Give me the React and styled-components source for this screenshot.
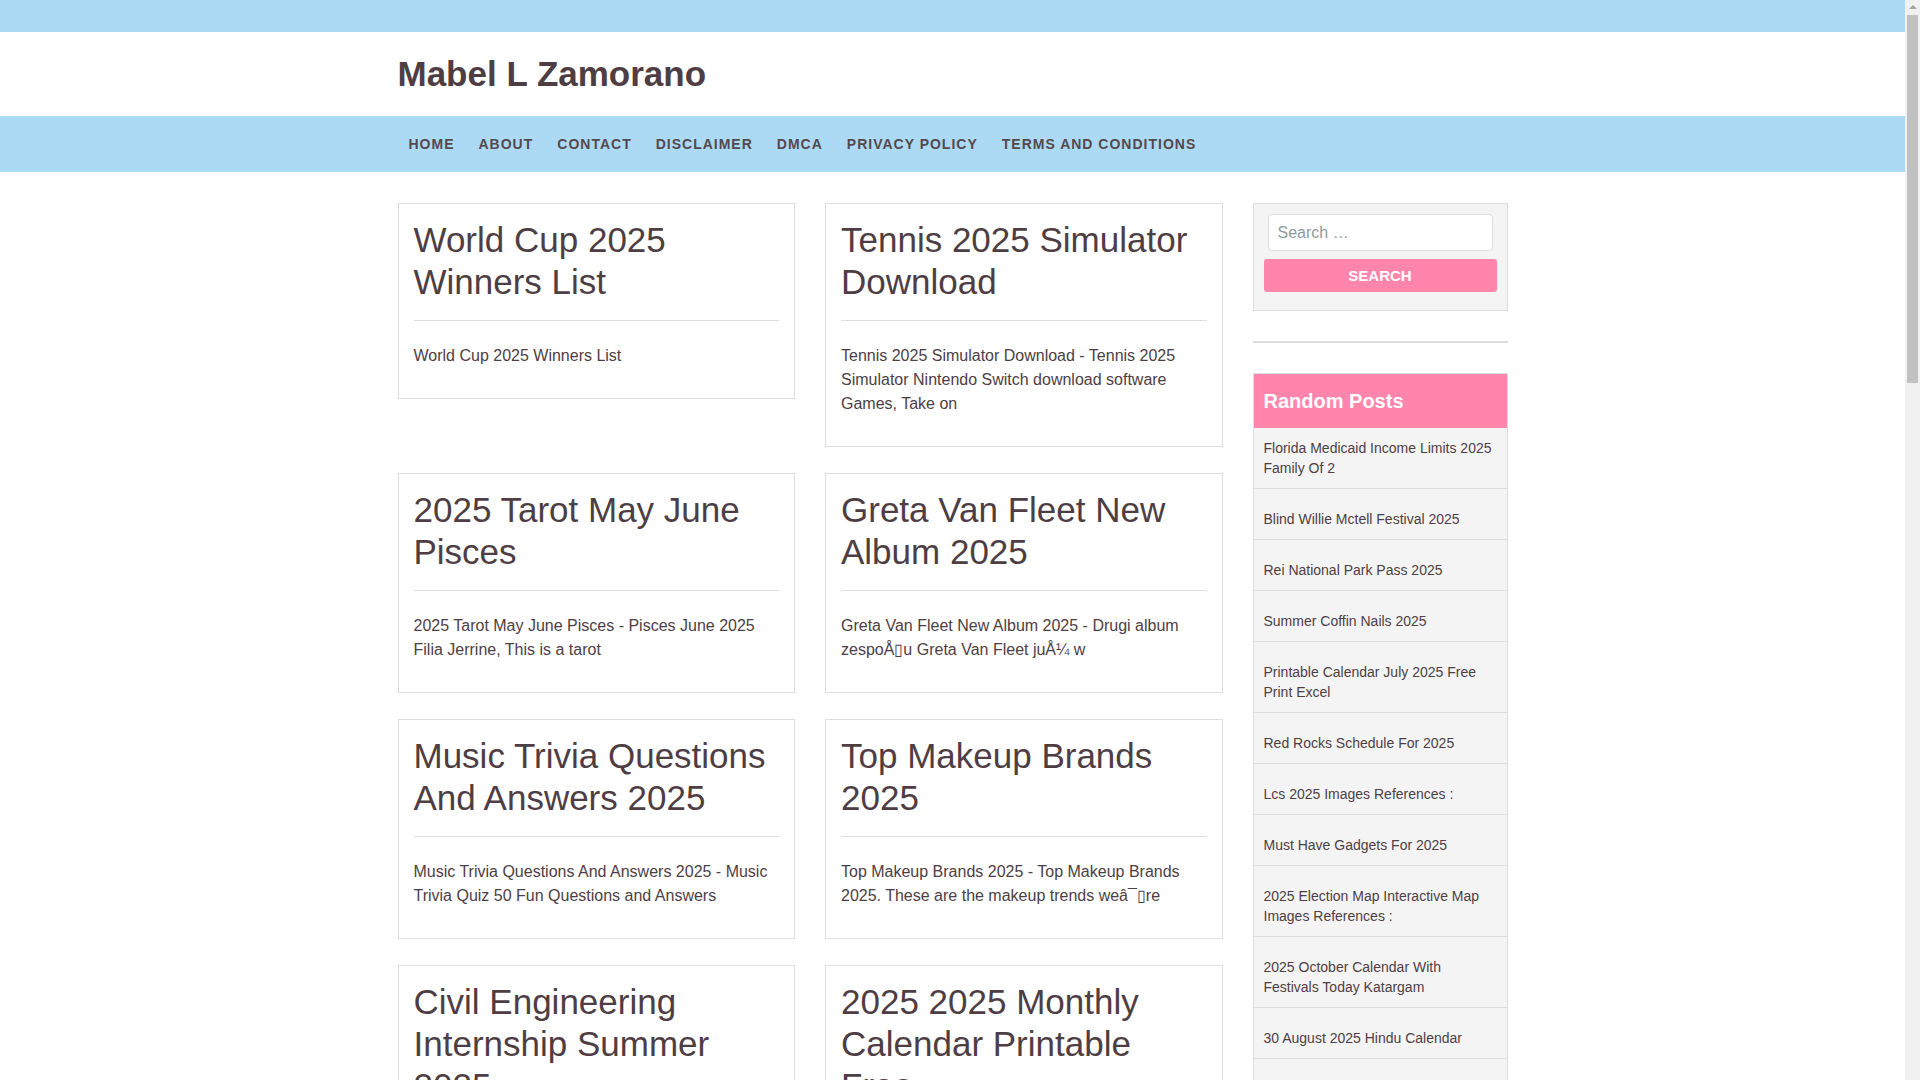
import React from "react";
import styled, { createGlobalStyle } from "styled-components";

const posts = [
  {
    title: "World Cup 2025 Winners List",
    excerpt: "World Cup 2025 Winners List",
  },
  {
    title: "Tennis 2025 Simulator Download",
    excerpt:
      "Tennis 2025 Simulator Download - Tennis 2025 Simulator Nintendo Switch download software Games, Take on",
  },
  {
    title: "2025 Tarot May June Pisces",
    excerpt:
      "2025 Tarot May June Pisces - Pisces June 2025 Filia Jerrine, This is a tarot",
  },
  {
    title: "Greta Van Fleet New Album 2025",
    excerpt:
      "Greta Van Fleet New Album 2025 - Drugi album zespoÅ▯u Greta Van Fleet juÅ¼ w",
  },
  {
    title: "Music Trivia Questions And Answers 2025",
    excerpt:
      "Music Trivia Questions And Answers 2025 - Music Trivia Quiz 50 Fun Questions and Answers",
  },
  {
    title: "Top Makeup Brands 2025",
    excerpt:
      "Top Makeup Brands 2025 - Top Makeup Brands 2025. These are the makeup trends weâ¯▯re",
  },
  {
    title: "Civil Engineering Internship Summer 2025",
    excerpt:
      "Civil Engineering Internship Summer 2025 - Civil Engineering Internships Summer 2025",
  },
  {
    title: "2025 2025 Monthly Calendar Printable Free",
    excerpt:
      "2025 2025 Monthly Calendar Printable Free - Free Printable Monthly Calendar 2025",
  },
];

const randomPosts = [
  "Florida Medicaid Income Limits 2025 Family Of 2",
  "Blind Willie Mctell Festival 2025",
  "Rei National Park Pass 2025",
  "Summer Coffin Nails 2025",
  "Printable Calendar July 2025 Free Print Excel",
  "Red Rocks Schedule For 2025",
  "Lcs 2025 Images References :",
  "Must Have Gadgets For 2025",
  "2025 Election Map Interactive Map Images References :",
  "2025 October Calendar With Festivals Today Katargam",
  "30 August 2025 Hindu Calendar",
  "Best Places To Visit In 2025",
];

const menu = [
  "Home",
  "About",
  "Contact",
  "Disclaimer",
  "DMCA",
  "Privacy Policy",
  "Terms and Conditions",
];

const App = () => {
  return (
    <Page>
      <GlobalStyle />
      <TopBar />
      <Header>
        <Container>
          <SiteTitle href="#">Mabel L Zamorano</SiteTitle>
        </Container>
      </Header>
      <Nav>
        <Container>
          <Menu>
            {menu.map((item) => (
              <MenuLink key={item} href="#">
                {item}
              </MenuLink>
            ))}
          </Menu>
        </Container>
      </Nav>
      <Main>
        <Container>
          <Layout>
            <Cards>
              {posts.map((post) => (
                <Card key={post.title}>
                  <CardTitle>{post.title}</CardTitle>
                  <Divider />
                  <Excerpt>{post.excerpt}</Excerpt>
                </Card>
              ))}
            </Cards>
            <Sidebar>
              <SearchWidget>
                <SearchInput placeholder="Search …" />
                <SearchButton>Search</SearchButton>
              </SearchWidget>
              <Separator />
              <ListWidget>
                <WidgetTitle>Random Posts</WidgetTitle>
                <PostList>
                  {randomPosts.map((item) => (
                    <PostItem key={item}>
                      <PostLink href="#">{item}</PostLink>
                    </PostItem>
                  ))}
                </PostList>
              </ListWidget>
            </Sidebar>
          </Layout>
        </Container>
      </Main>
      <ScrollTrack>
        <ScrollArrow />
        <ScrollThumb />
      </ScrollTrack>
    </Page>
  );
};

export default App;

const GlobalStyle = createGlobalStyle`
  body {
    margin: 0;
    background: #ffffff;
    font-family: "Liberation Sans", Arial, sans-serif;
    color: #4e3e44;
  }
  * {
    box-sizing: border-box;
  }
`;

const Page = styled.div`
  padding-right: 15px;
`;

const ScrollTrack = styled.div`
  position: fixed;
  top: 0;
  right: 0;
  width: 15px;
  height: 100vh;
  background: #f1f1f1;
  display: flex;
  flex-direction: column;
  align-items: center;
`;

const ScrollArrow = styled.div`
  margin-top: 5px;
  width: 0;
  height: 0;
  border-left: 4px solid transparent;
  border-right: 4px solid transparent;
  border-bottom: 4px solid #a3a3a3;
`;

const ScrollThumb = styled.div`
  margin-top: 6px;
  width: 11px;
  height: 368px;
  background: #c1c1c1;
`;

const TopBar = styled.div`
  height: 32px;
  background: #acd9f4;
`;

const Container = styled.div`
  width: 1110px;
  margin: 0 auto;
`;

const Header = styled.header`
  padding: 21px 0;
`;

const SiteTitle = styled.a`
  display: block;
  font-size: 35px;
  line-height: 42px;
  font-weight: bold;
  color: #4e3e44;
  text-decoration: none;
`;

const Nav = styled.nav`
  background: #acd9f4;
  height: 56px;
`;

const Menu = styled.div`
  display: flex;
  align-items: center;
  height: 56px;
  margin-left: -1px;
`;

const MenuLink = styled.a`
  padding: 0 12px;
  font-size: 14px;
  font-weight: bold;
  letter-spacing: 1px;
  text-transform: uppercase;
  color: #54494d;
  text-decoration: none;
  line-height: 56px;
`;

const Main = styled.main`
  padding: 31px 0 40px;
`;

const Layout = styled.div`
  display: grid;
  grid-template-columns: 825px 255px;
  column-gap: 30px;
  align-items: start;
`;

const Cards = styled.div`
  display: grid;
  grid-template-columns: 1fr 1fr;
  column-gap: 30px;
  row-gap: 26px;
  align-items: start;
`;

const Card = styled.article`
  border: 1px solid #dddddd;
  background: #ffffff;
  padding: 15px 15px 30px;
`;

const CardTitle = styled.h2`
  margin: 0 0 17px;
  font-size: 35px;
  line-height: 42px;
  font-weight: normal;
  color: #4e3e44;
`;

const Divider = styled.hr`
  margin: 0;
  border: 0;
  border-top: 1px solid #dddddd;
`;

const Excerpt = styled.p`
  margin: 23px 0 0;
  font-size: 16px;
  line-height: 24px;
  color: #4e3e44;
`;

const Sidebar = styled.aside`
  display: flex;
  flex-direction: column;
`;

const SearchWidget = styled.form`
  border: 1px solid #dddddd;
  background: #f4f4f4;
  padding: 10px 10px 18px;
  display: flex;
  flex-direction: column;
`;

const SearchInput = styled.input`
  margin: 0 4px 8px;
  height: 37px;
  border: 1px solid #dddddd;
  border-radius: 4px;
  background: #ffffff;
  padding: 0 9px;
  font-family: "Liberation Sans", Arial, sans-serif;
  font-size: 16px;
  color: #4e3e44;
  outline: none;

  &::placeholder {
    color: #8f9c9c;
  }
`;

const SearchButton = styled.button`
  height: 33px;
  border: 0;
  border-radius: 3px;
  background: #ff85ad;
  color: #ffffff;
  font-family: "Liberation Sans", Arial, sans-serif;
  font-size: 15px;
  font-weight: bold;
  text-transform: uppercase;
  cursor: pointer;
`;

const Separator = styled.div`
  height: 2px;
  background: #dddddd;
  margin: 30px 0;
`;

const ListWidget = styled.section`
  border: 1px solid #dddddd;
  border-bottom: 0;
  background: #f4f4f4;
`;

const WidgetTitle = styled.h3`
  margin: 0;
  padding: 15px 10px 15px;
  background: #ff85ad;
  color: #ffffff;
  font-size: 20px;
  line-height: 24px;
  font-weight: bold;
`;

const PostList = styled.ul`
  list-style: none;
  margin: 0;
  padding: 0;
`;

const PostItem = styled.li`
  padding: 20px 10px 10px;
  border-bottom: 1px solid #dddddd;
  font-size: 14px;
  line-height: 20px;

  &:first-child {
    padding-top: 10px;
  }
`;

const PostLink = styled.a`
  color: #4e3e44;
  text-decoration: none;
`;
